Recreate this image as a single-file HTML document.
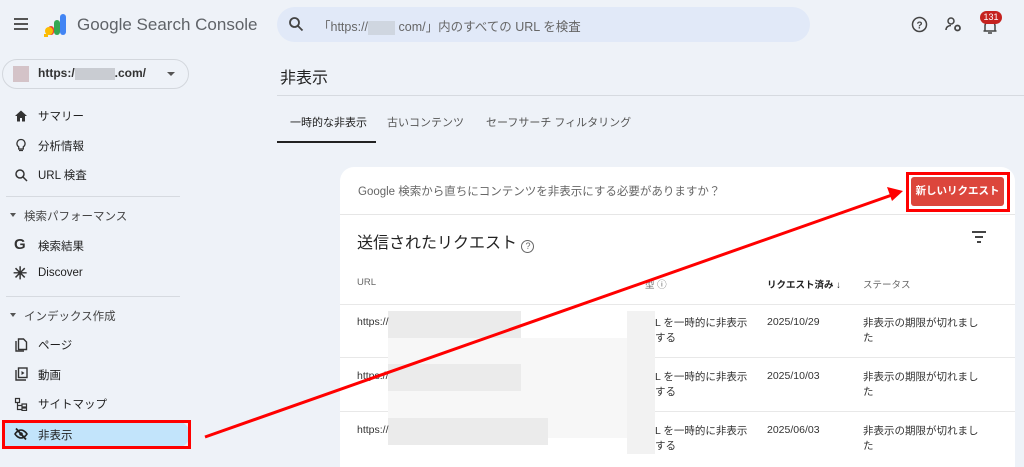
<!DOCTYPE html>
<html><head><meta charset="utf-8"><style>
*{box-sizing:border-box;margin:0;padding:0}
body{width:1024px;height:454px;overflow:hidden;background:#eef2f8;font-family:"Liberation Sans","Noto Sans CJK JP",sans-serif;color:#1f1f1f;position:relative}
.a{position:absolute;white-space:nowrap}
.nav{font-size:11.5px;color:#1f1f1f}
.sec{font-size:11.5px;color:#444}
.ic{position:absolute;left:14px;width:14px;height:14px}
.hr{position:absolute;height:1px;background:#d6dae0}
.t{font-size:10.5px;color:#333}
.blur{position:absolute;background:#ebebeb}
.blur2{position:absolute;background:#f7f7f7}
</style></head><body>
<div class="a" style="left:14px;top:18px;width:14px;height:2px;background:#555;box-shadow:0 5px 0 #555,0 10px 0 #555"></div>
<svg class="a" style="left:44px;top:13px" width="26" height="24" viewBox="0 0 26 24"><rect x="16" y="1" width="6" height="21" rx="3" fill="#4285f4"/><rect x="10" y="7" width="6" height="15" rx="3" fill="#34a853"/><rect x="4" y="13" width="6" height="9" rx="3" fill="#ea4335"/><circle cx="5" cy="18" r="4" fill="#fbbc04"/><rect x="0" y="21" width="4" height="3" fill="#fbbc04"/></svg>
<div class="a" style="left:77px;top:15px;font-size:17px;color:#5f6368">Google Search Console</div>
<div class="a" style="left:277px;top:7px;width:533px;height:35px;border-radius:18px;background:#e1e9f8"></div>
<svg class="a" style="left:288px;top:16px" width="16" height="16" viewBox="0 0 16 16"><circle cx="6.5" cy="6.5" r="4.5" fill="none" stroke="#444" stroke-width="1.8"/><path d="M10 10l4.5 4.5" stroke="#444" stroke-width="1.8"/></svg>
<div class="a" style="left:318px;top:16px;font-size:12.5px;color:#666">「https://<span style="display:inline-block;width:27px;height:14px;background:#cfd6e0;vertical-align:middle"></span> com/」内のすべての URL を検査</div>
<svg class="a" style="left:911px;top:16px" width="17" height="17" viewBox="0 0 17 17"><circle cx="8.5" cy="8.5" r="7" fill="none" stroke="#444" stroke-width="1.5"/><text x="8.5" y="12.5" font-size="10" text-anchor="middle" fill="#444" font-family="Liberation Sans" font-weight="bold">?</text></svg>
<svg class="a" style="left:945px;top:16px" width="18" height="17" viewBox="0 0 18 17"><circle cx="6" cy="5" r="3" fill="none" stroke="#444" stroke-width="1.5"/><path d="M1 14c0-3 2.5-4.5 5-4.5" fill="none" stroke="#444" stroke-width="1.5"/><circle cx="12.5" cy="12" r="2.5" fill="none" stroke="#444" stroke-width="1.8"/></svg>
<svg class="a" style="left:982px;top:19px" width="16" height="16" viewBox="0 0 16 16"><path d="M3 12V7a5 5 0 0110 0v5h1.5M1.5 12h13M6 14h4" fill="none" stroke="#444" stroke-width="1.5"/></svg>
<div class="a" style="left:980px;top:11px;width:22px;height:13px;border-radius:7px;background:#c5221f;color:#fff;font-size:9px;text-align:center;line-height:13px">131</div>
<div class="a" style="left:2px;top:59px;width:187px;height:30px;border:1px solid #d3d7dd;border-radius:15px"></div>
<div class="a" style="left:13px;top:66px;width:16px;height:16px;background:#d4c3c8"></div>
<div class="a" style="left:38px;top:66px;font-size:12px;font-weight:bold;color:#333">https:/<span style="display:inline-block;width:40px;height:12px;background:#c9ccd2;vertical-align:middle"></span>.com/</div>
<div class="a" style="left:167px;top:72px;border:4px solid transparent;border-top:4px solid #555"></div>
<svg class="ic" style="top:109px" viewBox="0 0 14 14"><path d="M7 1.5L1 7h2v5.5h3V9h2v3.5h3V7h2z" fill="#333"/></svg>
<div class="a nav" style="left:38px;top:108px">サマリー</div>
<svg class="ic" style="top:138px" viewBox="0 0 14 14"><path d="M7 1.5a4 4 0 00-2.3 7.3V11h4.6V8.8A4 4 0 007 1.5zM5 12.5h4" fill="none" stroke="#333" stroke-width="1.3"/></svg>
<div class="a nav" style="left:38px;top:138px">分析情報</div>
<svg class="ic" style="top:168px" viewBox="0 0 14 14"><circle cx="6" cy="6" r="4" fill="none" stroke="#333" stroke-width="1.5"/><path d="M9 9l4 4" stroke="#333" stroke-width="1.5"/></svg>
<div class="a nav" style="left:38px;top:167px">URL 検査</div>
<div class="hr" style="left:6px;top:196px;width:174px"></div>
<div class="a" style="left:10px;top:213px;border:3.5px solid transparent;border-top:4px solid #555"></div>
<div class="a sec" style="left:24px;top:208px">検索パフォーマンス</div>
<div class="a" style="left:14px;top:236px;font-size:15px;font-weight:bold;color:#333">G</div>
<div class="a nav" style="left:38px;top:238px">検索結果</div>
<div class="a" style="left:13px;top:264px;font-size:17px;font-weight:bold;color:#333">✳</div>
<div class="a nav" style="left:38px;top:267px">Discover</div>
<div class="hr" style="left:6px;top:296px;width:174px"></div>
<div class="a" style="left:10px;top:313px;border:3.5px solid transparent;border-top:4px solid #555"></div>
<div class="a sec" style="left:24px;top:308px">インデックス作成</div>
<svg class="ic" style="top:338px" viewBox="0 0 14 14"><path d="M2 3v10h8" fill="none" stroke="#333" stroke-width="1.4"/><path d="M4.5 1h5l3 3v7.5h-8z" fill="none" stroke="#333" stroke-width="1.4"/></svg>
<div class="a nav" style="left:38px;top:337px">ページ</div>
<svg class="ic" style="top:367px" viewBox="0 0 14 14"><path d="M2 3v10h10" fill="none" stroke="#333" stroke-width="1.4"/><rect x="4.5" y="1" width="8.5" height="9.5" fill="none" stroke="#333" stroke-width="1.4"/><path d="M7.5 4v4l3-2z" fill="#333"/></svg>
<div class="a nav" style="left:38px;top:367px">動画</div>
<svg class="ic" style="top:397px" viewBox="0 0 14 14"><path d="M1.5 1.5h4v4h-4zM8 7h4.5v3H8zM8 11h4.5v2.5H8zM3.5 5.5v7H8M3.5 8.5H8" fill="none" stroke="#333" stroke-width="1.2"/></svg>
<div class="a nav" style="left:38px;top:396px">サイトマップ</div>
<div class="a" style="left:2px;top:421px;width:188px;height:27px;background:#c2e4fb;border-radius:0 14px 14px 0"></div>
<div class="a" style="left:2px;top:420px;width:189px;height:29px;border:3px solid #ff0000"></div>
<svg class="ic" style="top:427px" viewBox="0 0 14 14"><path d="M1 7s2.5-4 6-4 6 4 6 4-2.5 4-6 4-6-4-6-4z" fill="none" stroke="#222" stroke-width="1.6"/><circle cx="7" cy="7" r="1.8" fill="#222"/><path d="M2 1.5l10 11" stroke="#222" stroke-width="1.8"/></svg>
<div class="a nav" style="left:38px;top:427px">非表示</div>
<div class="a" style="left:280px;top:64px;font-size:16px">非表示</div>
<div class="hr" style="left:277px;top:95px;width:747px"></div>
<div class="a" style="left:290px;top:114px;font-size:11px;color:#222">一時的な非表示</div>
<div class="a" style="left:387px;top:114px;font-size:11px;color:#555">古いコンテンツ</div>
<div class="a" style="left:486px;top:114px;font-size:11px;color:#555">セーフサーチ フィルタリング</div>
<div class="a" style="left:277px;top:141px;width:99px;height:2px;background:#222"></div>
<div class="a" style="left:340px;top:167px;width:675px;height:300px;background:#fff;border-radius:14px 14px 0 0"></div>
<div class="a" style="left:358px;top:183px;font-size:11.5px;color:#666">Google 検索から直ちにコンテンツを非表示にする必要がありますか？</div>
<div class="a" style="left:906px;top:172px;width:104px;height:40px;border:3px solid #ff0000"></div>
<div class="a" style="left:911px;top:177px;width:93px;height:29px;background:#dc463c;border-radius:3px;color:#fff;font-size:10.5px;font-weight:bold;text-align:center;line-height:29px">新しいリクエスト</div>
<div class="hr" style="left:340px;top:214px;width:675px;background:#e6e6e6"></div>
<div class="a" style="left:357px;top:229px;font-size:16px;color:#222">送信されたリクエスト <span style="display:inline-block;width:13px;height:13px;border:1.3px solid #666;border-radius:50%;font-size:9px;text-align:center;line-height:11px;color:#666;vertical-align:-1px">?</span></div>
<div class="a" style="left:972px;top:231px;width:14px;height:1.6px;background:#444"></div>
<div class="a" style="left:975px;top:236px;width:8px;height:1.6px;background:#444"></div>
<div class="a" style="left:977px;top:241px;width:4px;height:1.6px;background:#444"></div>
<div class="a t" style="left:357px;top:277px;font-size:9.5px;color:#666">URL</div>
<div class="a t" style="left:645px;top:277px;font-size:9.5px;color:#666">型 ⓘ</div>
<div class="a t" style="left:767px;top:277px;font-size:9.5px;color:#222;font-weight:bold">リクエスト済み ↓</div>
<div class="a t" style="left:863px;top:277px;font-size:9.5px;color:#666">ステータス</div>
<div class="hr" style="left:340px;top:304px;width:675px;background:#e8e8e8"></div>
<div class="hr" style="left:340px;top:357px;width:675px;background:#e8e8e8"></div>
<div class="hr" style="left:340px;top:411px;width:675px;background:#e8e8e8"></div>
<div class="blur2" style="left:388px;top:338px;width:267px;height:100px"></div>
<div class="blur" style="left:388px;top:311px;width:133px;height:27px"></div>
<div class="blur" style="left:388px;top:364px;width:133px;height:27px"></div>
<div class="blur" style="left:388px;top:418px;width:160px;height:27px"></div>
<div class="blur" style="left:627px;top:311px;width:28px;height:143px;background:#f2f2f2"></div>
<div class="a t" style="left:357px;top:316px">https://</div>
<div class="a t" style="left:357px;top:370px">https://</div>
<div class="a t" style="left:357px;top:424px">https://</div>
<div class="a t" style="left:655px;top:316px;line-height:15px">L を一時的に非表示<br>する</div>
<div class="a t" style="left:655px;top:370px;line-height:15px">L を一時的に非表示<br>する</div>
<div class="a t" style="left:655px;top:424px;line-height:15px">L を一時的に非表示<br>する</div>
<div class="a t" style="left:767px;top:316px">2025/10/29</div>
<div class="a t" style="left:767px;top:370px">2025/10/03</div>
<div class="a t" style="left:767px;top:424px">2025/06/03</div>
<div class="a t" style="left:863px;top:316px;line-height:15px">非表示の期限が切れまし<br>た</div>
<div class="a t" style="left:863px;top:370px;line-height:15px">非表示の期限が切れまし<br>た</div>
<div class="a t" style="left:863px;top:424px;line-height:15px">非表示の期限が切れまし<br>た</div>
<svg class="a" style="left:0;top:0" width="1024" height="454"><line x1="205" y1="437" x2="892" y2="195" stroke="#ff0000" stroke-width="3"/><path d="M903 191l-16-4 5 14z" fill="#ff0000"/></svg>
</body></html>
